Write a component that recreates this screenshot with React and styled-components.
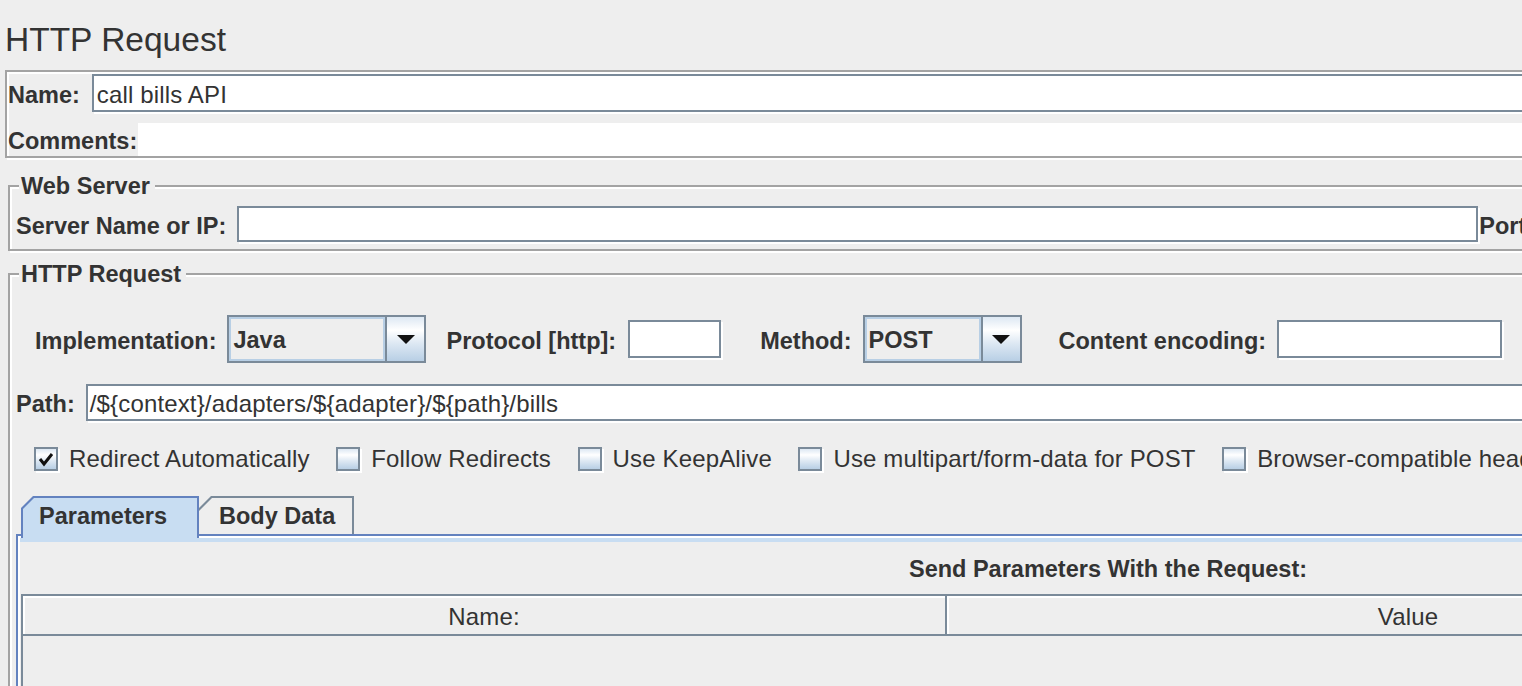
import React from "react";
import styled, { createGlobalStyle } from "styled-components";

const GlobalStyle = createGlobalStyle`
  html, body {
    margin: 0;
    padding: 0;
    overflow: hidden;
    background: #eeeeee;
  }
  body {
    font-family: "Liberation Sans", Arial, sans-serif;
    color: #333333;
  }
`;

const Page = styled.div`
  width: 2208px;
  height: 686px;
  overflow: hidden;
  background: #eeeeee;
`;

const Title = styled.h1`
  margin: 0;
  padding: 20px 0 0 5px;
  font-size: 33.5px;
  line-height: 40px;
  font-weight: normal;
`;

const NamePanel = styled.div`
  box-sizing: border-box;
  height: 88px;
  margin: 10px 0 0 5px;
  padding: 2px 0 0 1px;
  border: 2px solid #a3a3a3;
  box-shadow: inset 2px 2px 0 #fff, 2px 2px 0 #fff;
`;

const Row = styled.div`
  display: flex;
  align-items: center;
  height: ${(p) => p.$h}px;
  margin-top: ${(p) => p.$mt || 0}px;
  margin-left: ${(p) => p.$ml || 0}px;
`;

const Label = styled.span`
  flex: none;
  padding-top: 4px;
  font-weight: bold;
  font-size: 23.5px;
  white-space: nowrap;
  margin-right: ${(p) => (p.$gap !== undefined ? p.$gap : 11)}px;
`;

const TextField = styled.div`
  box-sizing: border-box;
  flex: ${(p) => (p.$w ? "none" : 1)};
  width: ${(p) => (p.$w ? `${p.$w}px` : "auto")};
  height: ${(p) => p.$h || 38}px;
  margin-right: ${(p) => p.$after || 0}px;
  padding-left: ${(p) => (p.$pad !== undefined ? p.$pad : 3)}px;
  padding-top: 3px;
  display: flex;
  align-items: center;
  background: #ffffff;
  border: 2px solid #7a8a99;
  box-shadow: 2px 2px 0 #ffffff;
  font-size: 24px;
  letter-spacing: 0.15px;
  white-space: nowrap;
  overflow: hidden;
`;

const CommentArea = styled.div`
  flex: 1;
  height: 100%;
  background: #ffffff;
`;

const Group = styled.fieldset`
  min-width: 0;
  margin: ${(p) => p.$mt}px 0 0 8px;
  padding: ${(p) => p.$pt}px 6px ${(p) => p.$pb}px 6px;
  border: 2px solid #a3a3a3;
  box-shadow: inset 2px 2px 0 #fff, 2px 2px 0 #fff;
`;

const Legend = styled.legend`
  margin-left: 3px;
  padding: 0 5px 0 2px;
  font-weight: bold;
  font-size: 23.5px;
  line-height: 24px;
  background: #eeeeee;
`;

const Combo = styled.div`
  box-sizing: border-box;
  flex: none;
  display: flex;
  width: ${(p) => p.$w}px;
  height: 48px;
  margin-right: ${(p) => p.$after || 0}px;
  border: 2px solid #7a8a99;
`;

const ComboValue = styled.div`
  flex: 1;
  display: flex;
  align-items: center;
  padding: 3px 0 0 2px;
  border: 2px solid #b8cfe5;
  background: #eeeeee;
  font-weight: bold;
  font-size: 23.5px;
`;

const ComboArrow = styled.div`
  width: 37px;
  display: flex;
  align-items: center;
  justify-content: center;
  border-left: 2px solid #7a8a99;
  background: linear-gradient(#dde8f3 0%, #ffffff 30%, #dde8f3 60%, #b8cfe5 100%);
`;

const CheckItem = styled.label`
  display: flex;
  align-items: center;
  margin-right: 26.5px;
  font-size: 24px;
  letter-spacing: 0.15px;
  white-space: nowrap;
`;

const Box = styled.span`
  box-sizing: border-box;
  width: 24px;
  height: 24px;
  margin-right: 11px;
  display: flex;
  align-items: center;
  justify-content: center;
  border: 2px solid #7a8a99;
  box-shadow: 2px 2px 0 #ffffff;
  background: linear-gradient(#dde8f3 0%, #ffffff 30%, #dde8f3 60%, #b8cfe5 100%);
`;

const TabPane = styled.div`
  margin-top: 25px;
`;

const TabStrip = styled.div`
  display: flex;
  align-items: flex-end;
  padding-left: 5px;
`;

const Tab = styled.div`
  box-sizing: border-box;
  position: relative;
  z-index: ${(p) => (p.$active ? 1 : 0)};
  width: ${(p) => p.$w}px;
  height: ${(p) => (p.$active ? 42 : 38)}px;
  margin-bottom: ${(p) => (p.$active ? -4 : 0)}px;
  padding: 2px 2px 0 ${(p) => (p.$first ? 2 : 0)}px;
  background: ${(p) => (p.$active ? "#6382bf" : "#7a8a99")};
  clip-path: polygon(0 12px, 12px 0, 100% 0, 100% 100%, 0 100%);
`;

const TabFace = styled.div`
  box-sizing: border-box;
  height: 100%;
  display: flex;
  align-items: center;
  padding-left: ${(p) => (p.$first ? 16 : 20)}px;
  padding-bottom: ${(p) => (p.$active ? 4 : 0)}px;
  background: ${(p) => (p.$active ? "#c8ddf2" : "#eeeeee")};
  clip-path: ${(p) =>
    p.$first
      ? "polygon(0 11px, 11px 0, 100% 0, 100% 100%, 0 100%)"
      : "polygon(0 13px, 13px 0, 100% 0, 100% 100%, 0 100%)"};
  font-weight: bold;
  font-size: 23.5px;
  white-space: nowrap;
`;

const TabContent = styled.div`
  height: 300px;
  border: 2px solid #6382bf;
  border-bottom: none;
  box-shadow: inset 2px 0 0 #ffffff;
`;

const Band = styled.div`
  height: 4px;
  margin-left: 2px;
  border-top: 2px solid #ffffff;
  background: #c8ddf2;
`;

const ParamsTitle = styled.div`
  height: 52px;
  padding-top: 2px;
  box-sizing: border-box;
  display: flex;
  align-items: center;
  justify-content: center;
  font-weight: bold;
  font-size: 23.5px;
`;

const Table = styled.div`
  margin-left: 3px;
  height: 200px;
  border-left: 2px solid #7a8a99;
`;

const HeaderRow = styled.div`
  box-sizing: border-box;
  display: flex;
  height: 42px;
  border-top: 2px solid #7a8a99;
  border-bottom: 2px solid #7a8a99;
`;

const HeaderCell = styled.div`
  box-sizing: border-box;
  flex: none;
  width: ${(p) => p.$w}px;
  padding-top: 4px;
  display: flex;
  align-items: center;
  justify-content: center;
  border-right: 2px solid #7a8a99;
  box-shadow: inset 2px 2px 0 #ffffff;
  font-size: 24px;
  letter-spacing: 0.15px;
`;

function Arrow() {
  return (
    <svg width="20" height="10" viewBox="0 0 20 10">
      <polygon points="1,1 19,1 10,10" fill="#111" />
    </svg>
  );
}

function Check() {
  return (
    <svg width="18" height="18" viewBox="0 0 18 18">
      <path d="M3 9 L7 14 L15 4" fill="none" stroke="#111" strokeWidth="3" />
    </svg>
  );
}

function Checkbox({ checked, children }) {
  return (
    <CheckItem>
      <Box>{checked && <Check />}</Box>
      {children}
    </CheckItem>
  );
}

export default function App() {
  return (
    <Page>
      <GlobalStyle />
      <Title>HTTP Request</Title>

      <NamePanel>
        <Row $h={38}>
          <Label $gap={12}>Name:</Label>
          <TextField>call bills API</TextField>
        </Row>
        <Row $h={33} $mt={11}>
          <Label $gap={1}>Comments:</Label>
          <CommentArea />
        </Row>
      </NamePanel>

      <Group $mt={16} $pt={8} $pb={7}>
        <Legend>Web Server</Legend>
        <Row $h={36}>
          <Label>Server Name or IP:</Label>
          <TextField $w={1241} $h={36} $after={1} />
          <Label>Port Number:</Label>
          <TextField $w={120} $h={36} />
        </Row>
      </Group>

      <Group $mt={11} $pt={29} $pb={0}>
        <Legend>HTTP Request</Legend>
        <Row $h={48} $ml={19}>
          <Label>Implementation:</Label>
          <Combo $w={199} $after={20}>
            <ComboValue>Java</ComboValue>
            <ComboArrow>
              <Arrow />
            </ComboArrow>
          </Combo>
          <Label $gap={12}>Protocol [http]:</Label>
          <TextField $w={93} $after={39} />
          <Label>Method:</Label>
          <Combo $w={159} $after={37}>
            <ComboValue>POST</ComboValue>
            <ComboArrow>
              <Arrow />
            </ComboArrow>
          </Combo>
          <Label $gap={11}>Content encoding:</Label>
          <TextField $w={225} />
        </Row>

        <Row $h={37} $mt={21}>
          <Label>Path:</Label>
          <TextField $h={37} $pad={2}>
            /${"{context}"}/adapters/${"{adapter}"}/${"{path}"}/bills
          </TextField>
        </Row>

        <Row $h={24} $mt={26} $ml={18}>
          <Checkbox checked>Redirect Automatically</Checkbox>
          <Checkbox>Follow Redirects</Checkbox>
          <Checkbox>Use KeepAlive</Checkbox>
          <Checkbox>Use multipart/form-data for POST</Checkbox>
          <Checkbox>Browser-compatible headers</Checkbox>
        </Row>

        <TabPane>
          <TabStrip>
            <Tab $w={178} $active $first>
              <TabFace $active $first>
                Parameters
              </TabFace>
            </Tab>
            <Tab $w={155}>
              <TabFace>Body Data</TabFace>
            </Tab>
          </TabStrip>
          <TabContent>
            <Band />
            <ParamsTitle>Send Parameters With the Request:</ParamsTitle>
            <Table>
              <HeaderRow>
                <HeaderCell $w={924}>Name:</HeaderCell>
                <HeaderCell $w={924}>Value</HeaderCell>
              </HeaderRow>
            </Table>
          </TabContent>
        </TabPane>
      </Group>
    </Page>
  );
}
